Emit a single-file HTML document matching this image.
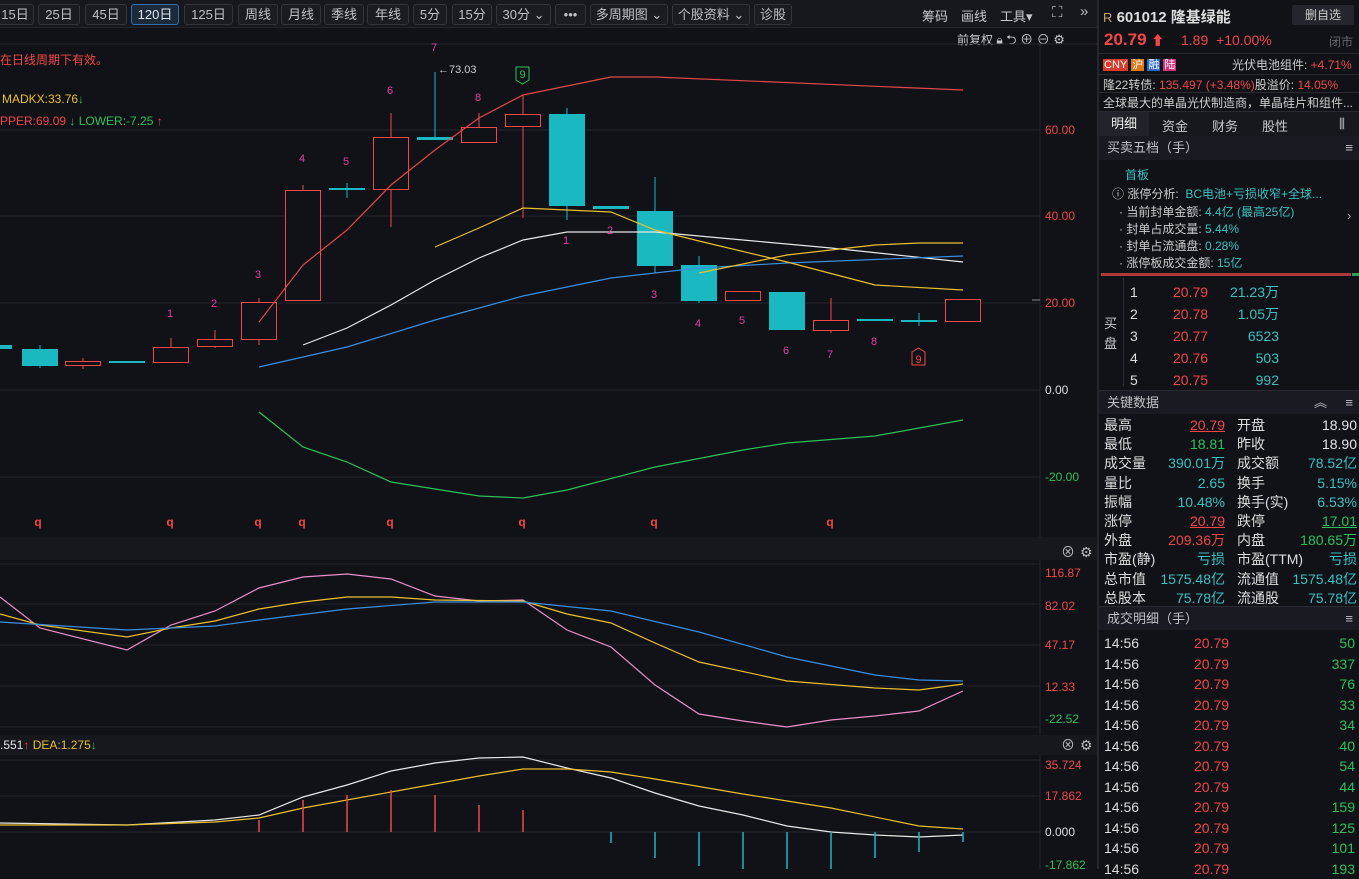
<!DOCTYPE html>
<html><head><meta charset="utf-8"><style>
*{margin:0;padding:0;box-sizing:border-box}
body{width:1359px;height:869px;background:#111218;overflow:hidden;position:relative;font-family:"Liberation Sans","Noto Sans CJK SC",sans-serif;color:#c8c8cc;font-size:13px}
.tb{position:absolute;top:0;left:0;width:1097px;height:28px;background:#17181e;border-bottom:1px solid #25262d}
.btn{position:absolute;top:4px;height:21px;border:1px solid #33343c;border-radius:3px;font-size:13px;line-height:19px;text-align:center;color:#c0c0c6;background:#1b1c22}
.btn.on{border-color:#2f6fb0;background:#1d2a3a;color:#e0e6ee}
.a{position:absolute;white-space:nowrap}
.rp{position:absolute;left:1097px;top:0;width:262px;height:869px;border-left:2px solid #26272e;background:#111218}
.r{color:#f04848}.g{color:#2ec05a}.c{color:#3cc0c0}.w{color:#e6e6e6}
.hd{position:absolute;left:0;width:262px;height:24px;background:#1a1b22;font-size:13px;line-height:24px;padding-left:8px;color:#c0c0c6}
</style></head><body>
<div class="tb">
<div class="btn" style="left:-4px;width:38px">15日</div>
<div class="btn" style="left:38px;width:42px">25日</div>
<div class="btn" style="left:85px;width:42px">45日</div>
<div class="btn on" style="left:131px;width:48px">120日</div>
<div class="btn" style="left:184px;width:49px">125日</div>
<div class="btn" style="left:238px;width:40px">周线</div>
<div class="btn" style="left:281px;width:40px">月线</div>
<div class="btn" style="left:324px;width:40px">季线</div>
<div class="btn" style="left:367px;width:42px">年线</div>
<div class="btn" style="left:413px;width:34px">5分</div>
<div class="btn" style="left:452px;width:40px">15分</div>
<div class="btn" style="left:496px;width:55px">30分 ⌄</div>
<div class="btn" style="left:555px;width:31px">•••</div>
<div class="btn" style="left:590px;width:78px">多周期图 ⌄</div>
<div class="btn" style="left:672px;width:78px">个股资料 ⌄</div>
<div class="btn" style="left:754px;width:38px">诊股</div>
<div class="a" style="left:922px;top:6px;color:#c8c8cc">筹码</div>
<div class="a" style="left:961px;top:6px;color:#c8c8cc">画线</div>
<div class="a" style="left:1000px;top:6px;color:#c8c8cc">工具▾</div>
<div class="a" style="left:1052px;top:4px;color:#bbb;font-size:15px">⛶</div>
<div class="a" style="left:1080px;top:3px;color:#bbb;font-size:15px">»</div>
</div>
<div class="a" style="left:957px;top:29px;font-size:12px;color:#c8c8cc">前复权 🔒︎ <span style="font-size:13px">⮌ ⊕ ⊖ ⚙</span></div>
<svg class="a" style="left:0;top:0" width="1097" height="869">
<rect x="0" y="537" width="1097" height="23" fill="#17181e"/>
<rect x="0" y="735" width="1097" height="20" fill="#17181e"/>
<line x1="0" y1="44" x2="1097" y2="44" stroke="#25262d"/>
<g stroke="#25262d" stroke-width="1">
<line x1="0" y1="130" x2="1040" y2="130"/><line x1="0" y1="216" x2="1040" y2="216"/><line x1="0" y1="303" x2="1040" y2="303"/><line x1="0" y1="390" x2="1040" y2="390"/><line x1="0" y1="477" x2="1040" y2="477"/>
<line x1="0" y1="564" x2="1040" y2="564"/><line x1="0" y1="604" x2="1040" y2="604"/><line x1="0" y1="645" x2="1040" y2="645"/><line x1="0" y1="686" x2="1040" y2="686"/><line x1="0" y1="727" x2="1040" y2="727"/>
<line x1="0" y1="760" x2="1040" y2="760"/><line x1="0" y1="796" x2="1040" y2="796"/><line x1="0" y1="832" x2="1040" y2="832"/>
<line x1="1040" y1="44" x2="1040" y2="537"/><line x1="1040" y1="560" x2="1040" y2="735"/><line x1="1040" y1="755" x2="1040" y2="869"/>
</g>
<g font-size="12" font-family="Liberation Sans">
<text x="1045" y="134" fill="#f04848">60.00</text><text x="1045" y="220" fill="#f04848">40.00</text><text x="1045" y="307" fill="#f04848">20.00</text><text x="1045" y="394" fill="#ddd">0.00</text><text x="1045" y="481" fill="#2ec05a">-20.00</text>
<text x="1045" y="577" fill="#f04848">116.87</text><text x="1045" y="610" fill="#f04848">82.02</text><text x="1045" y="649" fill="#f04848">47.17</text><text x="1045" y="691" fill="#f04848">12.33</text><text x="1045" y="723" fill="#2ec05a">-22.52</text>
<text x="1045" y="769" fill="#f04848">35.724</text><text x="1045" y="800" fill="#f04848">17.862</text><text x="1045" y="836" fill="#ddd">0.000</text><text x="1045" y="869" fill="#2ec05a">-17.862</text>
</g>
<line x1="1032" y1="300" x2="1040" y2="300" stroke="#888"/>
<g fill="#bbb" font-size="14"><text x="1061" y="557">⊗</text><text x="1080" y="557">⚙</text><text x="1061" y="750">⊗</text><text x="1080" y="750">⚙</text></g>
<!-- candles -->
<g stroke-width="1">
<rect x="0" y="345" width="12" height="4" fill="#1ab8c0"/>
<line x1="40" y1="345" x2="40" y2="368" stroke="#1ab8c0"/><rect x="22" y="349" width="36" height="17" fill="#1ab8c0"/>
<line x1="83" y1="358" x2="83" y2="369" stroke="#f04848"/><rect x="65.5" y="361.5" width="35" height="4" fill="#111218" stroke="#f04848"/>
<rect x="109" y="361" width="36" height="2" fill="#1ab8c0"/>
<line x1="171" y1="338" x2="171" y2="347" stroke="#f04848"/><rect x="153.5" y="347.5" width="35" height="15" fill="#111218" stroke="#f04848"/>
<line x1="215" y1="330" x2="215" y2="348" stroke="#f04848"/><rect x="197.5" y="339.5" width="35" height="7" fill="#111218" stroke="#f04848"/>
<line x1="259" y1="298" x2="259" y2="345" stroke="#f04848"/><rect x="241.5" y="302.5" width="35" height="37" fill="#111218" stroke="#f04848"/>
<line x1="303" y1="185" x2="303" y2="300" stroke="#f04848"/><rect x="285.5" y="190.5" width="35" height="110" fill="#111218" stroke="#f04848"/>
<line x1="347" y1="183" x2="347" y2="198" stroke="#1ab8c0"/><rect x="329" y="188" width="36" height="2" fill="#1ab8c0"/>
<line x1="391" y1="113" x2="391" y2="227" stroke="#f04848"/><rect x="373.5" y="137.5" width="35" height="52" fill="#111218" stroke="#f04848"/>
<line x1="435" y1="72" x2="435" y2="140" stroke="#1ab8c0"/><rect x="417" y="137" width="36" height="3" fill="#1ab8c0"/>
<line x1="479" y1="113" x2="479" y2="142" stroke="#f04848"/><rect x="461.5" y="127.5" width="35" height="15" fill="#111218" stroke="#f04848"/>
<line x1="523" y1="95" x2="523" y2="218" stroke="#f04848"/><rect x="505.5" y="114.5" width="35" height="12" fill="#111218" stroke="#f04848"/>
<line x1="567" y1="108" x2="567" y2="220" stroke="#1ab8c0"/><rect x="549" y="114" width="36" height="92" fill="#1ab8c0"/>
<rect x="593" y="206" width="36" height="3" fill="#1ab8c0"/>
<line x1="655" y1="177" x2="655" y2="273" stroke="#1ab8c0"/><rect x="637" y="211" width="36" height="55" fill="#1ab8c0"/>
<line x1="699" y1="256" x2="699" y2="303" stroke="#1ab8c0"/><rect x="681" y="265" width="36" height="36" fill="#1ab8c0"/>
<rect x="725.5" y="291.5" width="35" height="9" fill="#111218" stroke="#f04848"/>
<rect x="769" y="292" width="36" height="38" fill="#1ab8c0"/>
<line x1="831" y1="298" x2="831" y2="333" stroke="#f04848"/><rect x="813.5" y="320.5" width="35" height="10" fill="#111218" stroke="#f04848"/>
<rect x="857" y="319" width="36" height="2" fill="#1ab8c0"/>
<line x1="919" y1="313" x2="919" y2="326" stroke="#1ab8c0"/><rect x="901" y="320" width="36" height="2" fill="#1ab8c0"/>
<rect x="945.5" y="299.5" width="35" height="22" fill="#111218" stroke="#f04848"/>
</g>
<g fill="none" stroke-width="1.2">
<polyline stroke="#e04848" points="259,322 303,265 347,230 391,185 435,150 479,118 523,95 611,77 655,77 963,90"/>
<polyline stroke="#e8e8e8" points="303,345 347,328 391,305 435,280 479,258 523,240 567,232 655,232 743,240 831,248 963,262"/>
<polyline stroke="#3a8ee0" points="259,367 347,347 435,320 523,296 611,278 699,268 787,263 963,256"/>
<polyline stroke="#e8c030" points="435,247 479,228 523,208 611,212 655,230 699,241 787,262 875,285 963,290"/>
<polyline stroke="#e8c030" points="699,273 787,255 875,245 919,243 963,243"/>
<polyline stroke="#2ec05a" points="259,412 303,447 347,462 391,482 479,496 523,498 567,490 655,467 743,450 787,443 875,436 963,420"/>
<polyline stroke="#e890c8" points="0,597 40,628 127,650 171,625 215,611 259,588 303,577 347,574 391,579 435,596 479,601 523,600 567,630 611,647 655,685 699,714 743,721 787,727 831,720 875,716 919,711 963,691"/>
<polyline stroke="#e8c030" points="0,614 40,625 127,637 171,628 215,621 259,609 303,602 347,597 391,597 435,600 523,601 567,614 611,623 655,643 699,662 787,681 875,688 919,690 963,684"/>
<polyline stroke="#3a8ee0" points="0,622 127,630 215,626 259,620 347,609 435,602 523,602 611,611 699,632 787,657 875,675 919,680 963,681"/>
<polyline stroke="#e8e8e8" points="0,823 127,825 215,820 259,815 303,797 347,785 391,771 435,763 479,758 523,757 567,768 611,778 655,793 699,806 743,815 787,826 831,832 875,835 919,837 963,835"/>
<polyline stroke="#e8c030" points="0,825 127,825 215,822 259,818 303,808 391,792 479,776 523,769 567,769 611,772 655,779 743,794 831,808 919,826 963,829"/>
</g>
<g stroke="#f04848" stroke-width="1.5"><line x1="259" y1="820" x2="259" y2="832"/><line x1="303" y1="800" x2="303" y2="832"/><line x1="347" y1="795" x2="347" y2="832"/><line x1="391" y1="790" x2="391" y2="832"/><line x1="435" y1="795" x2="435" y2="832"/><line x1="479" y1="805" x2="479" y2="832"/><line x1="523" y1="810" x2="523" y2="832"/></g>
<g stroke="#1ab8c0" stroke-width="1.5"><line x1="611" y1="832" x2="611" y2="843"/><line x1="655" y1="832" x2="655" y2="858"/><line x1="699" y1="832" x2="699" y2="866"/><line x1="743" y1="832" x2="743" y2="869"/><line x1="787" y1="832" x2="787" y2="869"/><line x1="831" y1="832" x2="831" y2="869"/><line x1="875" y1="832" x2="875" y2="858"/><line x1="919" y1="832" x2="919" y2="852"/><line x1="963" y1="832" x2="963" y2="842"/></g>
<g fill="#e040a0" font-size="11" font-family="Liberation Sans" text-anchor="middle">
<text x="170" y="317">1</text><text x="214" y="307">2</text><text x="258" y="278">3</text><text x="302" y="162">4</text><text x="346" y="165">5</text><text x="390" y="94">6</text><text x="434" y="51">7</text><text x="478" y="101">8</text>
<text x="566" y="244">1</text><text x="610" y="234">2</text><text x="654" y="298">3</text><text x="698" y="327">4</text><text x="742" y="324">5</text><text x="786" y="354">6</text><text x="830" y="358">7</text><text x="874" y="345">8</text>
</g>
<path d="M516 67h13v13l-6.5 4l-6.5-4z" fill="none" stroke="#2ec05a"/><text x="522.5" y="78" fill="#2ec05a" font-size="11" text-anchor="middle">9</text>
<path d="M912 352l6.5-4l6.5 4v13h-13z" fill="none" stroke="#f04848"/><text x="918.5" y="363" fill="#f04848" font-size="11" text-anchor="middle">9</text>
<text x="438" y="73" fill="#ccc" font-size="11">←73.03</text>
<g fill="#f04848" font-size="12" font-weight="bold" text-anchor="middle"><text x="38" y="526">q</text><text x="170" y="526">q</text><text x="258" y="526">q</text><text x="302" y="526">q</text><text x="390" y="526">q</text><text x="522" y="526">q</text><text x="654" y="526">q</text><text x="830" y="526">q</text></g>
</svg>
<div class="a" style="left:0;top:51px;font-size:12px;color:#f04848">在日线周期下有效。</div>
<div class="a" style="left:2px;top:92px;font-size:12px;color:#e8c030">MADKX:33.76<span class="g">↓</span></div>
<div class="a" style="left:0;top:114px;font-size:12px;color:#f04848">PPER:69.09 <span class="g">↓</span> <span class="g">LOWER:-7.25</span> <span class="r">↑</span></div>
<div class="a" style="left:0;top:738px;font-size:12px;color:#e6e6e6">.551<span class="r">↑</span> <span style="color:#e8c030">DEA:1.275</span><span class="g">↓</span></div>

<div class="rp">
<div class="a" style="left:4px;top:6px;font-size:15px;color:#ddd"><span style="color:#c8a060;font-size:13px">R</span> <b>601012 隆基绿能</b></div>
<div class="a" style="left:193px;top:5px;width:62px;height:20px;background:#25262d;border-radius:2px;text-align:center;line-height:20px;font-size:12px;color:#ccc">删自选</div>
<div class="a r" style="left:5px;top:30px;font-size:17px;font-weight:bold">20.79 <span style="font-size:13px">⬆</span></div>
<div class="a r" style="left:82px;top:32px;font-size:14px">1.89 &nbsp;+10.00%</div>
<div class="a" style="left:230px;top:33px;font-size:12px;color:#666">闭市</div>
<div class="a" style="left:0;top:53px;width:262px;border-top:1px solid #2a2b32"></div>
<div class="a" style="left:4px;top:56px;font-size:11px;color:#fff"><span style="background:#d83c2c;padding:0 1px">CNY</span> <span style="background:#e07818;padding:0 1px">沪</span> <span style="background:#2a68c8;padding:0 1px">融</span> <span style="background:#d0307a;padding:0 1px">陆</span></div>
<div class="a" style="left:133px;top:56px;font-size:12px;color:#ccc">光伏电池组件: <span class="r">+4.71%</span></div>
<div class="a" style="left:0;top:74px;width:262px;border-top:1px solid #2a2b32"></div>
<div class="a" style="left:4px;top:76px;font-size:12px;color:#ccc">隆22转债: <span class="r">135.497 (+3.48%)</span>股溢价: <span class="r">14.05%</span></div>
<div class="a" style="left:0;top:92px;width:262px;border-top:1px solid #2a2b32"></div>
<div class="a" style="left:4px;top:94px;font-size:12px;color:#ccc">全球最大的单晶光伏制造商，单晶硅片和组件...</div>
<div class="a" style="left:0;top:111px;width:262px;height:25px;background:#17181e;border-top:1px solid #2a2b32"></div>
<div class="a" style="left:0;top:112px;width:50px;height:24px;background:#22232a;color:#eee;text-align:center;line-height:24px">明细</div>
<div class="a" style="left:52px;top:116px;width:48px;text-align:center">资金</div>
<div class="a" style="left:102px;top:116px;width:48px;text-align:center">财务</div>
<div class="a" style="left:152px;top:116px;width:48px;text-align:center">股性</div>
<div class="a" style="left:240px;top:116px">⫼</div>
<div class="hd" style="top:136px">买卖五档（手）<span style="position:absolute;right:8px">≡</span></div>
<div class="a c" style="left:26px;top:166px;font-size:12px">首板</div>
<div class="a" style="left:13px;top:185px;font-size:12px;color:#ccc">ⓘ 涨停分析: <span class="c">&nbsp;BC电池+亏损收窄+全球...</span></div>
<div class="a" style="left:20px;top:203px;font-size:12px;color:#ccc">· 当前封单金额: <span class="c">4.4亿 (最高25亿)</span></div>
<div class="a" style="left:20px;top:220px;font-size:12px;color:#ccc">· 封单占成交量: <span class="c">5.44%</span></div>
<div class="a" style="left:20px;top:237px;font-size:12px;color:#ccc">· 封单占流通盘: <span class="c">0.28%</span></div>
<div class="a" style="left:20px;top:254px;font-size:12px;color:#ccc">· 涨停板成交金额: <span class="c">15亿</span></div>
<div class="a" style="left:248px;top:208px;color:#aaa">›</div>
<div class="a" style="left:2px;top:273px;width:250px;height:3px;background:#b03a3a"></div>
<div class="a" style="left:253px;top:273px;width:9px;height:3px;background:#2ea050"></div>
<div class="a" style="left:24px;top:278px;height:108px;border-left:1px solid #2a2b32"></div>
<div class="a" style="left:5px;top:314px;font-size:13px;line-height:20px;color:#ccc">买<br>盘</div>
<div class="a" style="left:31px;top:281px;font-size:14px;line-height:22px;color:#ddd">1<br>2<br>3<br>4<br>5</div>
<div class="a r" style="left:74px;top:281px;font-size:14px;line-height:22px">20.79<br>20.78<br>20.77<br>20.76<br>20.75</div>
<div class="a c" style="left:130px;top:281px;width:50px;text-align:right;font-size:14px;line-height:22px">21.23万<br>1.05万<br>6523<br>503<br>992</div>
<div class="hd" style="top:390px;border-top:1px solid #2a2b32">关键数据<span style="position:absolute;right:8px">≡</span><span style="position:absolute;right:34px">︽</span></div>
<div class="a" style="left:5px;top:416px;font-size:14px;line-height:19.2px;color:#ddd">最高<br>最低<br>成交量<br>量比<br>振幅<br>涨停<br>外盘<br>市盈(静)<br>总市值<br>总股本</div>
<div class="a" style="left:60px;top:416px;width:66px;text-align:right;font-size:14px;line-height:19.2px"><span class="r" style="text-decoration:underline">20.79</span><br><span class="g">18.81</span><br><span class="c">390.01万</span><br><span class="c">2.65</span><br><span class="c">10.48%</span><br><span class="r" style="text-decoration:underline">20.79</span><br><span class="r">209.36万</span><br><span class="c">亏损</span><br><span class="c">1575.48亿</span><br><span class="c">75.78亿</span></div>
<div class="a" style="left:138px;top:416px;font-size:14px;line-height:19.2px;color:#ddd">开盘<br>昨收<br>成交额<br>换手<br>换手(实)<br>跌停<br>内盘<br>市盈(TTM)<br>流通值<br>流通股</div>
<div class="a" style="left:180px;top:416px;width:78px;text-align:right;font-size:14px;line-height:19.2px"><span class="w">18.90</span><br><span class="w">18.90</span><br><span class="c">78.52亿</span><br><span class="c">5.15%</span><br><span class="c">6.53%</span><br><span class="g" style="text-decoration:underline">17.01</span><br><span class="g">180.65万</span><br><span class="c">亏损</span><br><span class="c">1575.48亿</span><br><span class="c">75.78亿</span></div>
<div class="hd" style="top:606px;border-top:1px solid #2a2b32">成交明细（手）<span style="position:absolute;right:8px">≡</span></div>
<div class="a" style="left:5px;top:633px;font-size:14px;line-height:20.5px;color:#ddd">14:56<br>14:56<br>14:56<br>14:56<br>14:56<br>14:56<br>14:56<br>14:56<br>14:56<br>14:56<br>14:56<br>14:56</div>
<div class="a r" style="left:95px;top:633px;font-size:14px;line-height:20.5px">20.79<br>20.79<br>20.79<br>20.79<br>20.79<br>20.79<br>20.79<br>20.79<br>20.79<br>20.79<br>20.79<br>20.79</div>
<div class="a g" style="left:200px;top:633px;width:56px;text-align:right;font-size:14px;line-height:20.5px">50<br>337<br>76<br>33<br>34<br>40<br>54<br>44<br>159<br>125<br>101<br>193</div>
</div>
</body></html>
